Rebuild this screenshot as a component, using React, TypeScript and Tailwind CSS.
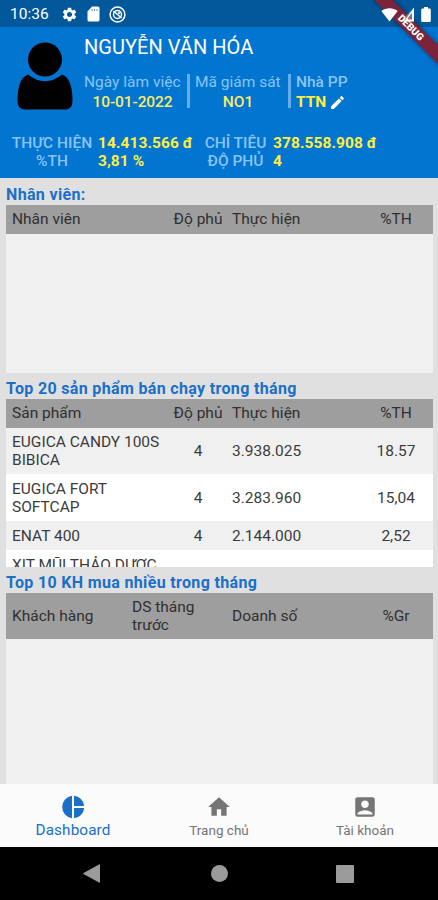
import React from "react";
import { MdSettings, MdEdit, MdHome, MdAccountBox } from "react-icons/md";

const products = [
  { name: "EUGICA CANDY 100S BIBICA", cover: "4", actual: "3.938.025", percent: "18.57", row: "h-[46px] bg-[#f0f0f0]" },
  { name: "EUGICA FORT SOFTCAP", cover: "4", actual: "3.283.960", percent: "15,04", row: "h-[47px] bg-white" },
  { name: "ENAT 400", cover: "4", actual: "2.144.000", percent: "2,52", row: "h-[29px] bg-[#f0f0f0]" },
  { name: "XỊT MŨI THẢO DƯỢC", cover: "", actual: "", percent: "", row: "h-[29px] bg-white" },
];

const StatusBar = () => {
  return (
    <div className="flex h-[27px] shrink-0 items-center bg-[#02589b] pl-[10px] pr-[7px] pt-[1px] text-white">
      <span className="w-[51px] pt-[2px] text-[15.5px] leading-none">10:36</span>
      <MdSettings className="size-[17px]" />
      <svg className="ml-[8px] size-4" viewBox="0 0 16 16" fill="currentColor">
        <path d="M6 .5h6q1.500 0 1.500 1.500v12q0 1.500-1.500 1.500H3Q1.500 15.500 1.500 14V5.500Z" />
        <path d="M6 3v2M8.500 3v2M11 3v2" stroke="#02589b" strokeWidth=".7" />
      </svg>
      <svg className="ml-[7px] size-[17px]" viewBox="0 0 17 17" fill="none" stroke="currentColor" strokeWidth="1.500">
        <circle cx="8.500" cy="8.500" r="7.400" />
        <circle cx="8.500" cy="8.500" r="4" />
        <path d="M4.500 5l8 7M9 6.500l2 1" />
      </svg>
      <div className="relative z-10 ml-auto flex items-center">
        <svg className="h-[15px] w-[17px]" viewBox="0 0 17 15" fill="currentColor">
          <path d="M8.500 14.500.3 4C5 .2 12 .2 16.700 4Z" />
        </svg>
        <svg className="ml-[1px] h-[15px] w-4" viewBox="0 0 16 15" fill="currentColor">
          <path d="M15 .5v14H1Z" opacity=".3" />
          <path d="M15 .5v14H5ZM13 5.500 8 12.500H13Z" fillRule="evenodd" />
        </svg>
        <svg className="ml-[6px] h-[15px] w-[10px]" viewBox="0 0 10 15" fill="currentColor">
          <path d="M3 0h4v1.500h1.500q1.300 0 1.300 1.300v10.900q0 1.300-1.300 1.300h-7q-1.300 0-1.300-1.300V2.800q0-1.300 1.300-1.300H3Z" />
        </svg>
      </div>
    </div>
  );
};

const DebugBanner = () => {
  return (
    <div className="absolute right-0 top-0 size-[68px] overflow-hidden">
      <div className="absolute left-[-24px] top-[21px] flex h-[13px] w-[130px] rotate-45 items-center justify-center bg-[#7b2338] text-[10px] font-black leading-none text-white shadow-[0_0_5px_rgba(0,0,0,0.5)]">
        DEBUG
      </div>
    </div>
  );
};

const Header = () => {
  return (
    <div className="h-[151px] shrink-0 bg-[#0275d1] text-[#8ac4f5]">
      <div className="flex h-[107px]">
        <svg className="ml-[17px] mt-[15px] h-[69px] w-[56px] shrink-0" viewBox="0 0 56 69">
          <path d="M11 32.500Q28 46 45 32.500Q55.500 36 55.500 59Q55.500 67.500 48 67.500H8Q.5 67.500 .5 59Q.5 36 11 32.500Z" />
          <circle cx="28" cy="17.500" r="19" fill="#0275d1" />
          <circle cx="28" cy="17.500" r="17" />
        </svg>
        <div className="ml-[11px] pt-[8px]">
          <div className="text-[20px] leading-[24px] tracking-[0.05px] text-white">NGUYỄN VĂN HÓA</div>
          <div className="mt-[13px] flex text-[15.5px] leading-[20px]">
            <div className="w-[103px] whitespace-nowrap">
              <div>Ngày làm việc</div>
              <div className="w-[97px] text-center font-medium tracking-[-0.1px] text-[#f8ec62]">10-01-2022</div>
            </div>
            <div className="mt-[2px] h-[34px] w-[3px] bg-[#65aceb]" />
            <div className="w-[98px] whitespace-nowrap pl-[5px]">
              <div>Mã giám sát</div>
              <div className="w-[86px] text-center font-medium text-[#f8ec62]">NO1</div>
            </div>
            <div className="mt-[2px] h-[34px] w-[3px] bg-[#65aceb]" />
            <div className="pl-[5px]">
              <div className="font-medium">Nhà PP</div>
              <div className="flex items-center font-bold text-[#ffee3e]">
                TTN
                <MdEdit className="ml-[3px] size-[17px] text-white" />
              </div>
            </div>
          </div>
        </div>
      </div>
      <div className="flex whitespace-nowrap text-[15.5px] font-bold leading-[18px]">
        <div className="ml-[11px] w-[82px] text-center font-medium">
          <div>THỰC HIỆN</div>
          <div>%TH</div>
        </div>
        <div className="ml-[5px] w-[105px] tracking-[0.08px] text-[#ffee3e]">
          <div>14.413.566 đ</div>
          <div>3,81 %</div>
        </div>
        <div className="w-[65px] text-center font-medium">
          <div>CHỈ TIÊU</div>
          <div>ĐỘ PHỦ</div>
        </div>
        <div className="ml-[5px] tracking-[0.08px] text-[#ffee3e]">
          <div>378.558.908 đ</div>
          <div>4</div>
        </div>
      </div>
    </div>
  );
};

const SectionTitle = ({ text }: { text: string }) => {
  return (
    <h2 className="h-[26px] shrink-0 pt-[6px] text-[16px] font-bold leading-[19px] tracking-[0.34px] text-[#1a6fc9]">
      {text}
    </h2>
  );
};

const TableHead = ({ first }: { first: string }) => {
  return (
    <div className="flex h-[29px] shrink-0 items-center whitespace-nowrap bg-[#9e9e9e] pl-[6px] pt-[1px] text-[15.5px] text-[#303030]">
      <div className="w-[160px]">{first}</div>
      <div className="w-[52px] text-center">Độ phủ</div>
      <div className="w-[138px] pl-[8px]">Thực hiện</div>
      <div className="w-[68px] text-center">%TH</div>
    </div>
  );
};

const BottomNav = () => {
  return (
    <div className="flex h-[63px] shrink-0 bg-[#fbfbfb] text-[13.5px] text-[#757575]">
      <div className="flex flex-1 flex-col items-center pt-[11px] text-[15.3px] text-[#1a6fc9]">
        <svg className="size-6" viewBox="0 0 24 24" fill="currentColor">
          <path d="M11 .8v22.400A11.300 11.300 0 0 1 11 .8ZM13 .8v10.200h10.200A11.300 11.300 0 0 0 13 .8ZM13 13v10.200A11.300 11.300 0 0 0 23.200 13Z" />
        </svg>
        <span className="mt-[1px] leading-[20px] tracking-[0.1px]">Dashboard</span>
      </div>
      <div className="flex flex-1 flex-col items-center pt-[10px]">
        <MdHome className="size-[26px]" />
        <span className="leading-[20px]">Trang chủ</span>
      </div>
      <div className="flex flex-1 flex-col items-center pt-[10px]">
        <MdAccountBox className="size-[26px]" />
        <span className="leading-[20px]">Tài khoản</span>
      </div>
    </div>
  );
};

const SystemBar = () => {
  return (
    <div className="flex h-[53px] shrink-0 items-center bg-black text-[#9b9b9b]">
      <svg className="ml-[83px] h-[19px] w-[17px]" viewBox="0 0 17 19" fill="currentColor">
        <path d="M16 .5q1-.5 1 .5v17q0 1-1 .5L.5 10q-.5-.5 0-1Z" />
      </svg>
      <div className="ml-[111px] size-[17px] rounded-full bg-[#9b9b9b]" />
      <div className="ml-[108px] size-[18px] rounded-[1px] bg-[#9b9b9b]" />
    </div>
  );
};

const App = () => {
  return (
    <div className="relative flex h-[900px] w-[438px] flex-col overflow-hidden bg-[#e0e0e0] font-[Roboto,sans-serif]">
      <StatusBar />
      <Header />

      <div className="flex min-h-0 flex-1 flex-col pl-[6px] pr-[5px] pt-[1px]">
        <section className="flex h-[194px] shrink-0 flex-col">
          <SectionTitle text="Nhân viên:" />
          <TableHead first="Nhân viên" />
          <div className="flex-1 bg-[#f0f0f0]" />
        </section>

        <section className="flex h-[194px] shrink-0 flex-col">
          <SectionTitle text="Top 20 sản phẩm bán chạy trong tháng" />
          <TableHead first="Sản phẩm" />
          <div className="min-h-0 flex-1 overflow-hidden text-[15.5px] leading-[18px] text-[#3c3c3c]">
            {products.map((item) => (
              <div key={item.name} className={`flex items-center pl-[6px] ${item.row}`}>
                <div className="w-[160px] pr-[4px]">{item.name}</div>
                <div className="w-[52px] text-center">{item.cover}</div>
                <div className="w-[138px] pl-[8px]">{item.actual}</div>
                <div className="w-[68px] text-center">{item.percent}</div>
              </div>
            ))}
          </div>
        </section>

        <section className="flex min-h-0 flex-1 flex-col">
          <SectionTitle text="Top 10 KH mua nhiều trong tháng" />
          <div className="flex h-[46px] shrink-0 items-center bg-[#9e9e9e] pl-[6px] text-[15.5px] leading-[18px] text-[#303030]">
            <div className="w-[120px]">Khách hàng</div>
            <div className="w-[100px] pr-[30px]">DS tháng trước</div>
            <div className="w-[130px]">Doanh số</div>
            <div className="w-[68px] text-center">%Gr</div>
          </div>
          <div className="flex-1 bg-[#f0f0f0]" />
        </section>
      </div>

      <BottomNav />
      <SystemBar />
      <DebugBanner />
    </div>
  );
};

export default App;
